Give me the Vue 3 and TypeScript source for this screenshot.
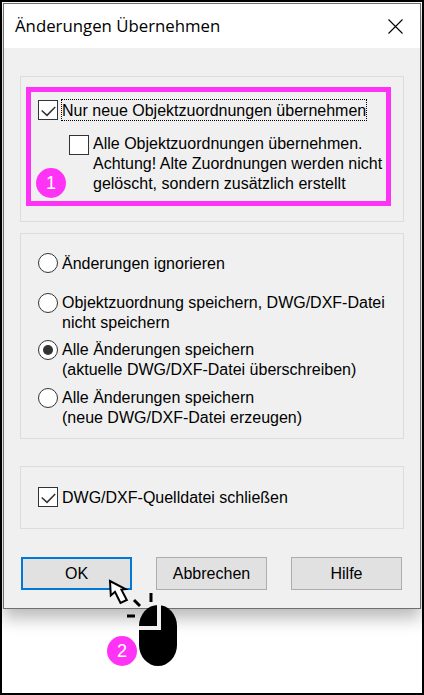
<template>
  <div class="screen">
    <div class="dialog">
      <!-- Title bar -->
      <header class="titlebar">
        <span class="title">Änderungen Übernehmen</span>
        <svg class="close" viewBox="0 0 15 15" fill="none" stroke="#000" stroke-width="1.1">
          <path d="M0.5 0.5 14.500 14.500M14.500 0.5 0.5 14.500" />
        </svg>
      </header>

      <div class="body">
        <!-- Zuordnungen -->
        <section class="group group-first">
          <div class="highlight">
            <div class="check-row">
              <span class="box">
                <svg viewBox="0 0 20 20" fill="none" stroke="#333" stroke-width="1.7">
                  <path d="M3 10.500 8.900 16 18 6.700" />
                </svg>
              </span>
              <span class="focus-label">Nur neue Objektzuordnungen übernehmen</span>
            </div>
            <div class="check-row sub-row">
              <span class="box"></span>
              <span class="label">
                Alle Objektzuordnungen übernehmen.<br />
                Achtung! Alte Zuordnungen werden nicht<br />
                gelöscht, sondern zusätzlich erstellt
              </span>
            </div>
            <span class="badge badge-one">1</span>
          </div>
        </section>

        <!-- Speicheroptionen -->
        <section class="group group-radios">
          <div
            v-for="option in radioOptions"
            :key="option.lines[0]"
            class="radio-row"
            :class="option.cls"
          >
            <span class="radio" :class="{ selected: option.selected }"></span>
            <span class="label">
              <template v-for="line in option.lines" :key="line">{{ line }}<br /></template>
            </span>
          </div>
        </section>

        <!-- Quelldatei -->
        <section class="group group-last">
          <div class="check-row">
            <span class="box">
              <svg viewBox="0 0 20 20" fill="none" stroke="#333" stroke-width="1.7">
                <path d="M3 10.500 8.900 16 18 6.700" />
              </svg>
            </span>
            <span class="label">DWG/DXF-Quelldatei schließen</span>
          </div>
        </section>

        <div class="buttons">
          <button class="btn btn-default">OK</button>
          <button class="btn">Abbrechen</button>
          <button class="btn">Hilfe</button>
        </div>
      </div>
    </div>

    <!-- Annotation: cursor and mouse over the page -->
    <svg class="pointer" viewBox="0 0 24 32">
      <path
        d="M2 4 2.800 18.500 7 14.800 12.500 26 18.800 23 13.400 12.600 17.500 12.200Z"
        fill="#fff"
        stroke="#000"
        stroke-width="2"
        stroke-linejoin="miter"
      />
    </svg>
    <svg class="mouse" viewBox="0 0 52 75">
      <path d="M24 1v9M7 8l6 6M0 24h8" stroke="#000" stroke-width="3" fill="none" />
      <rect x="12" y="13" width="38" height="61" rx="19" ry="21" fill="#000" />
      <path d="M32 13v23H12" stroke="#f0f0f0" stroke-width="4" fill="none" />
    </svg>
    <span class="badge badge-two">2</span>
  </div>
</template>

<script setup lang="ts">
interface RadioOption {
  lines: string[]
  selected?: boolean
  cls: string
}

const radioOptions: RadioOption[] = [
  { lines: ['Änderungen ignorieren'], cls: 'row-single' },
  { lines: ['Objektzuordnung speichern, DWG/DXF-Datei', 'nicht speichern'], cls: 'row-second' },
  {
    lines: ['Alle Änderungen speichern', '(aktuelle DWG/DXF-Datei überschreiben)'],
    selected: true,
    cls: 'row-third',
  },
  { lines: ['Alle Änderungen speichern', '(neue DWG/DXF-Datei erzeugen)'], cls: 'row-fourth' },
]
</script>

<style scoped>
.screen {
  position: relative;
  width: 424px;
  height: 695px;
  box-sizing: border-box;
  border: 2px solid #000;
  padding: 1px;
  background: #fff;
  overflow: hidden;
  font-family: 'Liberation Sans', Arial, sans-serif;
  font-size: 16px;
  line-height: 20px;
  color: #000;
}

.dialog {
  width: 418px;
  height: 606px;
  box-sizing: border-box;
  border: 1px solid #6f6f6f;
  background: #f0f0f0;
  box-shadow: 0 9px 16px rgba(0, 0, 0, 0.28);
}

.titlebar {
  display: flex;
  align-items: center;
  justify-content: space-between;
  height: 44px;
  padding: 0 17px 0 11px;
  background: #fff;
}

.title {
  font-family: 'Open Sans', 'Noto Sans', sans-serif;
  font-size: 16.800px;
}

.close {
  width: 15px;
  height: 15px;
}

.body {
  padding: 28px 16px 0;
}

.group {
  box-sizing: border-box;
  border: 1px solid #dcdcdc;
}

.group-first {
  height: 146px;
  padding: 10px 12px 0 5px;
}

.group-radios {
  height: 206px;
  margin-top: 11px;
  padding: 0 0 0 17px;
}

.group-last {
  height: 63px;
  margin-top: 27px;
  padding: 20px 0 0 17px;
}

.highlight {
  position: relative;
  box-sizing: border-box;
  height: 119px;
  border: 5px solid #ff33f5;
  padding: 7px 0 0 7px;
}

.check-row {
  display: flex;
  align-items: flex-start;
}

.sub-row {
  margin: 12px 0 0 31px;
}

.box {
  flex: none;
  display: block;
  width: 20px;
  height: 20px;
  box-sizing: border-box;
  border: 1px solid #333;
  background: #fff;
  margin-top: 1px;
}

.box svg {
  display: block;
  width: 18px;
  height: 18px;
}

.group-last .box {
  margin-top: 0;
}

.label {
  margin-left: 4px;
  padding-top: 1px;
}

.sub-row .box {
  margin-top: 2px;
}

.focus-label {
  margin-left: 3px;
  height: 20px;
  line-height: 22px;
  border: 1px dotted #000;
}

.radio-row {
  display: flex;
  align-items: flex-start;
}

.row-single {
  margin-top: 19px;
}

.row-second {
  margin-top: 19px;
}

.row-second .label,
.row-third .label,
.row-fourth .label {
  margin-top: -1px;
}

.row-third {
  margin-top: 7px;
}

.row-fourth {
  margin-top: 8px;
}

.radio {
  flex: none;
  position: relative;
  width: 20px;
  height: 20px;
  box-sizing: border-box;
  border: 1px solid #333;
  border-radius: 50%;
  background: #fff;
}

.radio.selected::after {
  content: '';
  position: absolute;
  left: 4px;
  top: 4px;
  width: 10px;
  height: 10px;
  border-radius: 50%;
  background: #333;
}

.buttons {
  display: flex;
  gap: 24px;
  margin-top: 28px;
  padding-left: 1px;
}

.btn {
  width: 111px;
  height: 33px;
  box-sizing: border-box;
  border: 1px solid #adadad;
  background: #e1e1e1;
  font: inherit;
  color: #000;
  padding: 0;
}

.btn-default {
  border: 2px solid #0078d7;
}

.badge {
  position: absolute;
  display: flex;
  align-items: center;
  justify-content: center;
  width: 30px;
  height: 30px;
  border-radius: 50%;
  background: #ff33f5;
  color: #fff;
  font-size: 18px;
}

.badge-one {
  left: 5px;
  top: 76px;
}

.badge-two {
  left: 105px;
  top: 634px;
}

.pointer {
  position: absolute;
  left: 106px;
  top: 575px;
  width: 24px;
  height: 32px;
}

.mouse {
  position: absolute;
  left: 125px;
  top: 590px;
  width: 52px;
  height: 75px;
}
</style>

<style>
html,
body {
  margin: 0;
  background: #fff;
}
</style>
